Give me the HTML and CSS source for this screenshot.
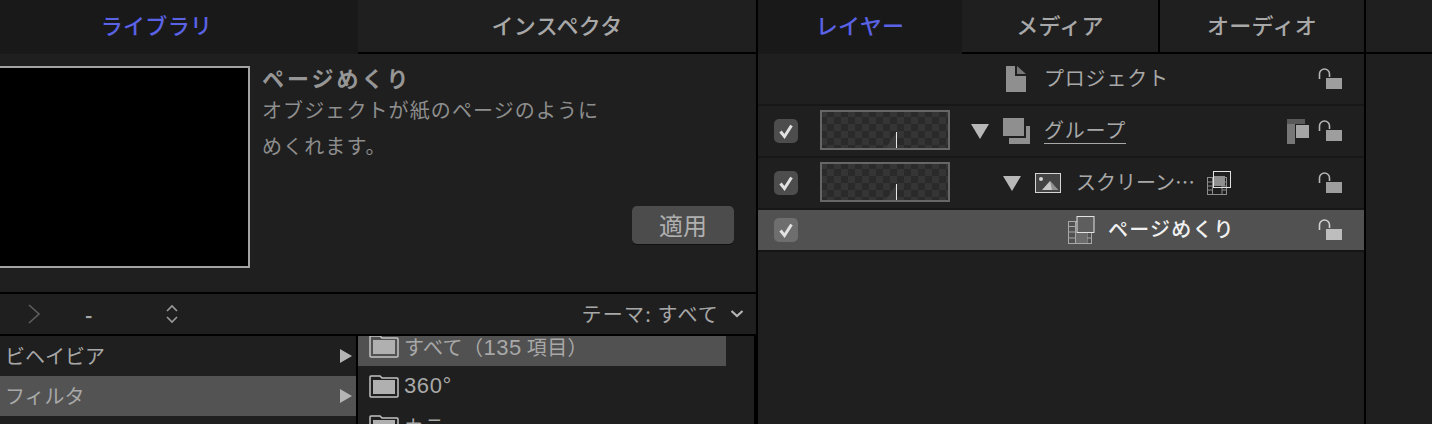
FILE: index.html
```html
<!DOCTYPE html>
<html lang="ja">
<head>
    <meta charset="UTF-8">
    <title>ページめくり</title>
    <link rel="stylesheet" href="styles.css">
</head>
<body>
    <svg class="defs" width="0" height="0">
        <defs>
            <g id="lock">
                <path d="M1.5 11V6a5 5 0 0 1 10 0v3" fill="none" stroke="currentColor" stroke-width="1.6"/>
                <rect x="8" y="10" width="16" height="11" fill="currentColor" opacity=".85"/>
            </g>
            <g id="folder">
                <path d="M1 22V3a1 1 0 0 1 1-1h9l2 2h15a1 1 0 0 1 1 1v17a1 1 0 0 1-1 1H2a1 1 0 0 1-1-1z" fill="none" stroke="#c4c4c4" stroke-width="1.5"/>
                <rect x="4" y="6" width="22" height="14" fill="#b0b0b0"/>
            </g>
            <g id="tick">
                <path d="M6.5 12.500l4 5 7-11" fill="none" stroke="#e2e2e2" stroke-width="3"/>
            </g>
            <pattern id="checks" width="14" height="14" patternUnits="userSpaceOnUse">
                <rect width="14" height="14" fill="#2a2a2a"/>
                <rect width="7" height="7" fill="#353535"/>
                <rect x="7" y="7" width="7" height="7" fill="#353535"/>
            </pattern>
        </defs>
    </svg>

    <div class="app">
        <section class="panel left">
            <div class="tabs">
                <div class="tab active lib">ライブラリ</div>
                <div class="tab insp">インスペクタ</div>
            </div>

            <div class="detail">
                <div class="preview"></div>
                <div class="info">
                    <h2 class="title">ページめくり</h2>
                    <p class="desc">オブジェクトが紙のページのように<br>めくれます。</p>
                    <button class="apply">適用</button>
                </div>
            </div>

            <div class="toolbar">
                <svg class="nav" width="14" height="22" viewBox="0 0 14 22"><path d="M2 2l10 9-10 9" fill="none" stroke="#5f5f5f" stroke-width="1.6"/></svg>
                <span class="crumb">-</span>
                <svg class="updown" width="14" height="22" viewBox="0 0 14 22"><path d="M2 8l5-5 5 5M2 14l5 5 5-5" fill="none" stroke="#9a9a9a" stroke-width="1.6"/></svg>
                <span class="theme">テーマ: すべて</span>
                <svg class="chev" width="14" height="10" viewBox="0 0 14 10"><path d="M1.500 2l5.500 5 5.500-5" fill="none" stroke="#b5b5b5" stroke-width="2.2"/></svg>
            </div>

            <div class="browser">
                <ul class="cats">
                    <li class="cat">ビヘイビア<i class="arrow"></i></li>
                    <li class="cat sel">フィルタ<i class="arrow"></i></li>
                </ul>
                <ul class="folders">
                    <li class="folder sel"><svg width="30" height="25" viewBox="0 0 30 25"><use href="#folder"/></svg><span>すべて（<span class="num">135</span> 項目）</span></li>
                    <li class="folder"><svg width="30" height="25" viewBox="0 0 30 25"><use href="#folder"/></svg><span class="num">360°</span></li>
                    <li class="folder"><svg width="30" height="25" viewBox="0 0 30 25"><use href="#folder"/></svg>カラー</li>
                </ul>
                <div class="scrollbar"></div>
            </div>
        </section>

        <section class="panel right">
            <div class="tabs">
                <div class="tab active layers">レイヤー</div>
                <div class="tab media">メディア</div>
                <div class="tab audio">オーディオ</div>
            </div>

            <div class="row project">
                <svg class="ic-doc" width="20" height="26" viewBox="0 0 20 26"><path d="M0 0h9v10h11v16H0z" fill="#8f8f8f"/><path d="M11 0l9 8h-9z" fill="#777"/></svg>
                <span class="name">プロジェクト</span>
                <svg class="lock" width="24" height="22" viewBox="0 0 24 22"><use href="#lock"/></svg>
            </div>

            <div class="row group">
                <label class="check"><svg width="24" height="24" viewBox="0 0 24 24"><use href="#tick"/></svg></label>
                <svg class="thumb" width="130" height="40" viewBox="0 0 130 40"><rect x="1" y="1" width="128" height="38" fill="url(#checks)" stroke="#666" stroke-width="2"/><path d="M76 23L66 38h10z" fill="#3c3c3c"/><path d="M76.500 22v16" stroke="#e8e8e8"/></svg>
                <i class="tri"></i>
                <svg class="ic-group" width="27" height="26" viewBox="0 0 27 26"><rect width="21" height="18" fill="#8f8f8f"/><path d="M23 8h4v18H6v-6h17z" fill="#8f8f8f"/></svg>
                <span class="name link">グループ</span>
                <svg class="ic-stack" width="22" height="25" viewBox="0 0 22 25"><path d="M0 0h18v5H0z" fill="#595959"/><path d="M0 5h8v20H0z" fill="#777"/><rect x="9" y="6" width="13" height="13" fill="#a5a5a5"/></svg>
                <svg class="lock" width="24" height="22" viewBox="0 0 24 22"><use href="#lock"/></svg>
            </div>

            <div class="row image">
                <label class="check"><svg width="24" height="24" viewBox="0 0 24 24"><use href="#tick"/></svg></label>
                <svg class="thumb" width="130" height="40" viewBox="0 0 130 40"><rect x="1" y="1" width="128" height="38" fill="url(#checks)" stroke="#666" stroke-width="2"/><path d="M76 23L66 38h10z" fill="#3c3c3c"/><path d="M76.500 22v16" stroke="#e8e8e8"/></svg>
                <i class="tri deep"></i>
                <svg class="ic-image" width="26" height="20" viewBox="0 0 26 20"><rect x=".5" y=".5" width="25" height="19" fill="#444" stroke="#d5d5d5"/><circle cx="6" cy="6" r="2" fill="#d5d5d5"/><path d="M7 17l8-9 8 9z" fill="#c9c9c9"/><path d="M15 8l8 9h-6z" fill="#8f8f8f"/></svg>
                <span class="name">スクリーン…</span>
                <svg class="ic-filter small" width="24" height="24" viewBox="0 0 24 24"><rect x=".5" y="6.500" width="19" height="17" fill="none" stroke="#8d8d8d"/><path d="M5.500 6.500v17M15 6.500v17M.5 11h5M.5 15h5M.5 19h5M15 11h5M15 15h5M15 19h5" stroke="#8d8d8d" fill="none"/><rect x="6" y="5" width="12" height="10" fill="#8f8f8f"/><rect x="6.500" y=".5" width="17" height="16" fill="none" stroke="#e2e2e2"/></svg>
                <svg class="lock" width="24" height="22" viewBox="0 0 24 22"><use href="#lock"/></svg>
            </div>

            <div class="row filter sel">
                <label class="check"><svg width="24" height="24" viewBox="0 0 24 24"><use href="#tick"/></svg></label>
                <svg class="ic-filter big" width="27" height="28" viewBox="0 0 27 28"><rect x=".5" y="5.500" width="23" height="22" fill="none" stroke="#a8a8a8"/><path d="M7.500 5.500v22M19 5.500v22M.5 10.500h7M.5 16h7M.5 22h7M19 10.500h5M19 16h5M19 22h5" stroke="#a8a8a8" fill="none"/><rect x="8" y="17" width="11" height="10" fill="#6c6c6c"/><rect x="9" y=".5" width="17" height="16" fill="#5e5e5e" stroke="#e2e2e2"/></svg>
                <span class="name">ページめくり</span>
                <svg class="lock" width="24" height="22" viewBox="0 0 24 22"><use href="#lock"/></svg>
            </div>
        </section>

        <section class="panel spare">
            <div class="spare-head"></div>
        </section>
    </div>
</body>
</html>
```

FILE: styles.css
```css
* {
    box-sizing: border-box;
}
html, body {
    margin: 0;
    height: 100%;
    overflow: hidden;
    background: #1f1f1f;
}
body {
    font-family: "Noto Sans CJK JP", "Noto Sans", sans-serif;
    color: #a8a8a8;
}
ul {
    list-style: none;
    margin: 0;
    padding: 0;
}
.defs {
    display: block;
    height: 0;
}
.app {
    display: flex;
    width: 1432px;
    height: 424px;
    background: #000;
}
.panel {
    height: 424px;
    background: #1f1f1f;
    overflow: hidden;
}
.left {
    width: 756px;
    display: flex;
    flex-direction: column;
    margin-right: 2px;
}
.right {
    width: 606px;
    margin-right: 2px;
}
.spare {
    width: 66px;
}
.spare-head {
    height: 54px;
    border-bottom: 2px solid #000;
}

/* tabs */
.tabs {
    display: flex;
    height: 54px;
    flex: none;
}
.tab {
    display: flex;
    align-items: center;
    justify-content: center;
    height: 54px;
    padding-bottom: 5px;
    font-size: 22px;
    font-weight: 500;
    letter-spacing: .3px;
    color: #a8a8a8;
    border-bottom: 2px solid #000;
}
.tab.active {
    background: #191919;
    color: #5a62e6;
    border-bottom: none;
    padding-bottom: 7px;
}
.tab.lib {
    width: 358px;
    padding-right: 45px;
}
.insp { flex: 1; }
.layers { width: 204px; }
.media { width: 196px; }
.audio {
    width: 206px;
    border-left: 2px solid #000;
}

/* detail */
.detail {
    display: flex;
    height: 240px;
    flex: none;
    padding-top: 12px;
    border-bottom: 2px solid #000;
}
.preview {
    width: 250px;
    height: 202px;
    background: #000;
    border: 2px solid #a3a3a3;
    border-left: none;
}
.info {
    flex: 1;
    display: flex;
    flex-direction: column;
    padding-left: 12px;
}
.title {
    margin: -2px 0 0;
    font-size: 22px;
    font-weight: 700;
    line-height: 26px;
    letter-spacing: 3px;
    color: #969696;
}
.desc {
    margin: 2px 0 0;
    font-size: 20px;
    line-height: 36px;
    letter-spacing: 1.1px;
    color: #8e8e8e;
}
.apply {
    align-self: flex-start;
    width: 102px;
    height: 38px;
    margin: 42px 0 0 370px;
    border: none;
    border-radius: 5px;
    background: #4c4c4c;
    box-shadow: 0 1px 0 #111;
    font-family: inherit;
    font-size: 24px;
    line-height: 1;
    color: #b0b0b0;
}

/* toolbar */
.toolbar {
    display: flex;
    align-items: center;
    height: 42px;
    flex: none;
    border-bottom: 2px solid #000;
    padding-right: 12px;
    color: #a8a8a8;
}
.nav { margin-left: 27px; }
.crumb {
    margin-left: 44px;
    width: 10px;
    font-weight: 700;
    font-size: 20px;
}
.updown { margin-left: 70px; }
.theme {
    margin-left: auto;
    padding-bottom: 2px;
    font-size: 20px;
    letter-spacing: 1.2px;
}
.chev { margin-left: 11px; }

/* browser columns */
.browser {
    display: flex;
    flex: 1;
    overflow: hidden;
}
.cats {
    width: 356px;
    flex: none;
}
.cat {
    display: flex;
    align-items: center;
    justify-content: space-between;
    height: 40px;
    padding: 0 4px 0 5px;
    font-size: 20px;
    line-height: 38px;
    color: #a8a8a8;
}
.cat.sel {
    background: #535353;
}
.arrow {
    width: 0;
    height: 0;
    border-left: 12px solid #b5b5b5;
    border-top: 7px solid transparent;
    border-bottom: 7px solid transparent;
}
.folders {
    width: 368px;
    margin: 0 0 0 2px;
    flex: none;
    box-shadow: -2px 0 0 #000;
}
.folder {
    display: flex;
    align-items: center;
    gap: 5px;
    width: 368px;
    height: 40px;
    padding-left: 11px;
    font-size: 20px;
    color: #a8a8a8;
}
.folder.sel {
    height: 30px;
    padding-bottom: 10px;
    background: #515151;
    overflow: hidden;
    letter-spacing: .4px;
}
.num {
    font-family: "Liberation Sans", sans-serif;
    font-size: 22px;
    letter-spacing: .6px;
}
.scrollbar {
    width: 2px;
    margin-left: 28px;
    background: #000;
    flex: none;
}

/* layer rows */
.row {
    display: flex;
    align-items: center;
    height: 52px;
    border-bottom: 2px solid #171717;
    padding-left: 16px;
    color: #a8a8a8;
    font-size: 20px;
}
.row .lock {
    margin-left: auto;
    margin-right: 22px;
    color: #b5b5b5;
}
.row .name {
    letter-spacing: .8px;
    padding-bottom: 4px;
}
.check {
    display: block;
    width: 24px;
    height: 24px;
    border-radius: 5px;
    background: #4d4d4d;
}
.check svg {
    display: block;
}
.thumb {
    margin: -2px 0 0 22px;
}
.tri {
    width: 0;
    height: 0;
    margin-left: 21px;
    border-top: 15px solid #b8b8b8;
    border-left: 9px solid transparent;
    border-right: 9px solid transparent;
}
.tri.deep {
    margin-left: 53px;
}
.project {
    padding-left: 248px;
    height: 52px;
}
.project .name { margin-left: 18px; }
.ic-group { margin-left: 14px; }
.group .name { margin-left: 14px; }
.link {
    border-bottom: 1px solid #a8a8a8;
    line-height: 26px;
    padding-bottom: 0 !important;
    margin-top: -2px;
}
.ic-stack {
    margin-left: auto;
    margin-right: 9px;
}
.group .lock { margin-left: 0; }
.ic-image { margin-left: 14px; }
.row.image .name {
    margin-left: 15px;
    letter-spacing: 0;
}
.ic-filter.small { margin-left: 12px; }
.filter {
    height: 42px;
    border-bottom: 2px solid #151515;
}
.filter.sel {
    background: #515151;
}
.filter .check {
    background: #6e6e6e;
}
.ic-filter.big { margin-left: 270px; }
.row.filter .name {
    margin-left: 13px;
    color: #f0f0f0;
    font-weight: 500;
    letter-spacing: 1.2px;
}
.row.filter .lock { color: #d0d0d0; }
```
